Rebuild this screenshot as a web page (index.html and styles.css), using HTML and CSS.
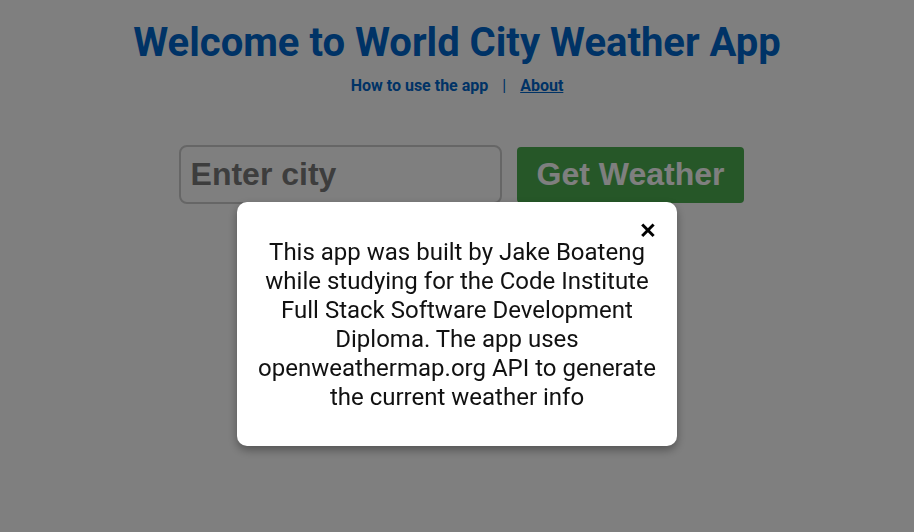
FILE: index.html
```html
<!DOCTYPE html>
<html lang="en">
<head>
<meta charset="utf-8">
<title>World City Weather App</title>
<link rel="stylesheet" href="styles.css">
</head>
<body>
<header class="header">
  <h1 class="title">Welcome to World City Weather App</h1>
  <nav class="nav">
    <a class="nav-link" href="#">How to use the app</a>
    <span class="nav-sep">|</span>
    <a class="nav-link nav-link-active" href="#">About</a>
  </nav>
</header>
<main class="search">
  <input class="city-input" type="text" placeholder="Enter city">
  <button class="get-btn" type="button">Get Weather</button>
</main>
<div class="overlay">
  <div class="modal">
    <span class="close">&times;</span>
    <p class="modal-text">This app was built by Jake Boateng while studying for the Code Institute Full Stack Software Development Diploma. The app uses openweathermap.org API to generate the current weather info</p>
  </div>
</div>
</body>
</html>
```
FILE: styles.css
```css
* { box-sizing: border-box; }
html, body { height: 100%; }
body {
  margin: 0;
  background: #ffffff;
  font-family: Roboto, "Liberation Sans", sans-serif;
  text-align: center;
}
.header {
  padding-top: 19px;
}
.title {
  margin: 0;
  font-size: 40px;
  font-weight: 700;
  color: #0066cc;
  line-height: 47px;
}
.nav {
  margin-top: 10px;
  display: flex;
  justify-content: center;
  align-items: center;
  gap: 14px;
  font-size: 16px;
  font-weight: 700;
}
.nav-link {
  color: #0066cc;
  text-decoration: none;
}
.nav-link-active {
  text-decoration: underline;
}
.nav-sep {
  color: #0066cc;
  font-weight: 400;
}
.search {
  margin-top: 50px;
  padding-left: 9px;
  display: flex;
  justify-content: center;
  align-items: center;
  gap: 15px;
}
.city-input {
  width: 323px;
  height: 59px;
  border: 2px solid #cccccc;
  border-radius: 8px;
  padding: 0 10px;
  font-family: "Liberation Sans", Arial, sans-serif;
  font-size: 32px;
  font-weight: 700;
  background: #ffffff;
  outline: none;
}
.city-input::placeholder {
  color: #7a7a7a;
  opacity: 1;
}
.get-btn {
  height: 56px;
  padding: 0 20px;
  border: none;
  border-radius: 4px;
  background: #4caf50;
  color: #ffffff;
  font-family: "Liberation Sans", Arial, sans-serif;
  font-size: 32px;
  font-weight: 700;
}
.overlay {
  position: fixed;
  inset: 0;
  background: rgba(0, 0, 0, 0.5);
}
.modal {
  position: absolute;
  left: 237px;
  top: 202px;
  width: 440px;
  background: #ffffff;
  border-radius: 10px;
  padding: 36px 20px 34px;
  box-shadow: 0 4px 10px rgba(0, 0, 0, 0.35);
}
.close {
  position: absolute;
  top: 13px;
  right: 21px;
  font-size: 30px;
  font-weight: 500;
  line-height: 1;
  color: #000000;
}
.modal-text {
  margin: 0;
  font-size: 24px;
  line-height: 29px;
  color: #111111;
}
```
